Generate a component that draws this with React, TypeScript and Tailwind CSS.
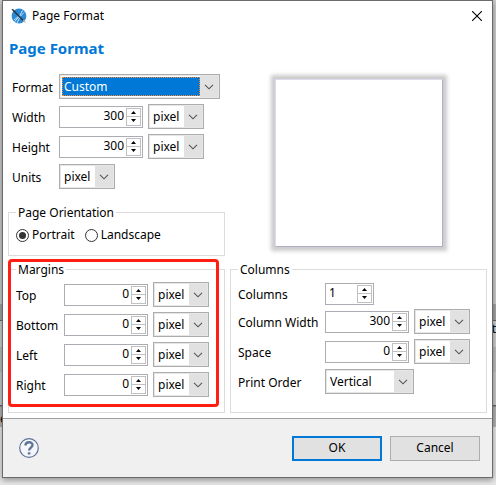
import { ReactNode } from "react";

function Chevron() {
  return (
    <span className="pointer-events-none absolute inset-y-px right-px flex w-[18px] items-center justify-center bg-[#e1e1e1]">
      <svg width="10" height="6" viewBox="0 0 10 6" fill="none" stroke="#555" strokeWidth="1.1">
        <path d="M1 .8 5 4.8 9 .8" />
      </svg>
    </span>
  );
}

function Combo({ id, label, value, width, active }: { id: string; label?: string; value: string; width: string; active?: boolean }) {
  return (
    <div className={`relative h-[25px] border border-[#adadad] bg-[#e6e6e6] p-px ${width}`}>
      <select
        id={id}
        aria-label={label}
        className={`block h-full w-full appearance-none rounded-none bg-white pr-5 pl-[3px] leading-[18px] outline-none ${
          active ? "text-white" : "text-black"
        }`}
      >
        <option>{value}</option>
      </select>
      {active && (
        <span aria-hidden="true" className="pointer-events-none absolute inset-y-[2px] right-[19px] left-[2px] border border-dotted border-[#ff8728] bg-[#0078d7] pl-px leading-[17px] text-white">
          {value}
        </span>
      )}
      <Chevron />
    </div>
  );
}

function Spinner({ id, value, width, left }: { id: string; value: string; width: string; left?: boolean }) {
  return (
    <div className={`flex h-[22px] border border-[#abadb3] bg-white p-px ${width}`}>
      <input
        id={id}
        type="text"
        defaultValue={value}
        className={`min-w-0 flex-1 px-0.5 pb-0.5 leading-4 outline-none ${left ? "text-left" : "text-right"}`}
      />
      <span className="flex w-[15px] flex-col border border-[#c0c0c0]">
        <button type="button" aria-label="Increase" className="flex flex-1 items-center justify-center border-b border-[#c0c0c0]">
          <svg width="5" height="3" viewBox="0 0 5 3"><path d="M0 3 2.5 0 5 3z" /></svg>
        </button>
        <button type="button" aria-label="Decrease" className="flex flex-1 items-center justify-center">
          <svg width="5" height="3" viewBox="0 0 5 3"><path d="M0 0 2.5 3 5 0z" /></svg>
        </button>
      </span>
    </div>
  );
}

function Row({ id, label, labelWidth, children }: { id: string; label: string; labelWidth: string; children: ReactNode }) {
  return (
    <div className="flex h-[25px] items-center">
      <label htmlFor={id} className={`shrink-0 pt-0.5 whitespace-nowrap ${labelWidth}`}>{label}</label>
      <div className="flex items-center gap-[5px]">{children}</div>
    </div>
  );
}

function Measure({ name, label, value, labelWidth }: { name: string; label: string; value: string; labelWidth: string }) {
  return (
    <Row id={name} label={label} labelWidth={labelWidth}>
      <Spinner id={name} value={value} width="w-[84px]" />
      <Combo id={`${name}-unit`} label={`${label} unit`} value="pixel" width="w-14" />
    </Row>
  );
}

function Radio({ label, checked }: { label: string; checked?: boolean }) {
  return (
    <label className="flex items-center gap-[3px]">
      <input
        type="radio"
        name="orientation"
        defaultChecked={checked}
        className="size-[13px] appearance-none rounded-full border border-[#333] bg-white bg-clip-content p-[2px] checked:bg-[#333]"
      />
      {label}
    </label>
  );
}

function Logo() {
  return (
    <svg width="16" height="16" viewBox="0 0 16 16" aria-hidden="true">
      <circle cx="8" cy="8" r="7.4" fill="#2a8ad6" />
      <path d="M3.5 14 8 8.5M6 15 9 9M8.5 8 11.5 2.5M9 8.500 13 4.500M3 12l5-4" stroke="#c3e3f8" strokeWidth="1" />
      <path d="m1.200 1.200 11.500 11.800" stroke="#273442" strokeWidth="1.6" />
      <path d="m11.500 13 1.500-1.500 2.500 4z" fill="#b9b9b9" />
    </svg>
  );
}

export default function App() {
  return (
    <div className="relative overflow-hidden bg-[linear-gradient(#cdcdcd_304px,#a6a6a6_304px,#a6a6a6_320px,#686868_320px,#686868_321px,#cfcfcf_321px,#cfcfcf_347px,#bdbdbd_347px,#bdbdbd_372px,#cacaca_372px,#cacaca_405px,#686868_405px,#686868_406px,#b4b4b4_407px,#b4b4b4_427px,#e8e8e8_427px)] pr-[3px] pb-[7px] pl-[2px] font-['Noto_Sans','Liberation_Sans',sans-serif] text-xs leading-4 text-black">
      <span aria-hidden="true" className="absolute top-[411px] left-0">e</span>
      <span aria-hidden="true" className="absolute top-[321px] right-0">t</span>
      <main className="relative border border-[#6b6b6b] bg-white shadow-[0_2px_6px_#0006]">
        <header className="flex h-[29px] items-center gap-[5px] pr-[9px] pl-2">
          <Logo />
          <span className="flex-1">Page Format</span>
          <button type="button" aria-label="Close" className="p-px">
            <svg width="10" height="10" viewBox="0 0 10 10" stroke="#000" strokeWidth="1.1"><path d="m0 0 10 10M10 0 0 10" /></svg>
          </button>
        </header>

        <h1 className="mt-2 pl-1.5 text-[15px] leading-5 font-bold text-[#0078d7]">Page Format</h1>

        <div className="mt-4 flex">
          <div className="flex w-[222px] shrink-0 flex-col gap-[5px] pl-[9px]">
            <Row id="format" label="Format" labelWidth="w-[47px]">
              <Combo id="format" value="Custom" width="w-[161px]" active />
            </Row>
            <Measure name="width" label="Width" value="300" labelWidth="w-[47px]" />
            <Measure name="height" label="Height" value="300" labelWidth="w-[47px]" />
            <Row id="units" label="Units" labelWidth="w-[47px]">
              <Combo id="units" value="pixel" width="w-14" />
            </Row>
            <fieldset className="mt-[9px] ml-[-4px] h-[53px] w-[217px] border border-[#dcdcdc] pl-[7px]">
              <legend className="px-[2px] pt-0.5">Page Orientation</legend>
              <div className="flex h-7 items-center gap-[10px]">
                <Radio label="Portrait" checked />
                <Radio label="Landscape" />
              </div>
            </fieldset>
          </div>
          <div className="flex flex-1 justify-center pt-[5px]">
            <div className="size-[168px] border border-t-[#dcdcf0] border-r-[#b0b0c8] border-b-[#b0b0c8] border-l-[#dcdcf0] bg-white shadow-[0_0_4px_4px_#cbcbcb]" />
          </div>
        </div>

        <div className="mt-1 flex gap-[5px] px-[5px]">
          <div className="relative w-[217px] shrink-0">
            <fieldset className="h-[153px] border border-[#dcdcdc] pl-[7px]">
              <legend className="px-[2px] pt-0.5">Margins</legend>
              <div className="flex flex-col gap-[5px] pt-1">
                <Measure name="top" label="Top" value="0" labelWidth="w-12" />
                <Measure name="bottom" label="Bottom" value="0" labelWidth="w-12" />
                <Measure name="left" label="Left" value="0" labelWidth="w-12" />
                <Measure name="right" label="Right" value="0" labelWidth="w-12" />
              </div>
            </fieldset>
            <div className="pointer-events-none absolute -top-px left-0 h-[148px] w-[211px] rounded-sm border-3 border-[#ff1e12]" />
          </div>
          <fieldset className="h-[153px] flex-1 border border-[#dcdcdc] pl-[7px]">
            <legend className="px-[2px] pt-0.5">Columns</legend>
            <div className="flex flex-col gap-[5px] pt-[3px]">
              <div className="-mb-[2px]">
                <Row id="columns" label="Columns" labelWidth="w-[87px]">
                  <Spinner id="columns" value="1" width="w-[49px]" left />
                </Row>
              </div>
              <Measure name="column-width" label="Column Width" value="300" labelWidth="w-[87px]" />
              <Measure name="space" label="Space" value="0" labelWidth="w-[87px]" />
              <Row id="order" label="Print Order" labelWidth="w-[87px]">
                <Combo id="order" value="Vertical" width="w-[89px]" />
              </Row>
            </div>
          </fieldset>
        </div>

        <footer className="mt-[5px] flex h-[59px] items-center border-t border-[#a0a0a0] bg-[#f0f0f0] pr-3 pl-4">
          <button type="button" aria-label="Help" className="size-5">
            <svg width="20" height="20" viewBox="0 0 20 20" fill="none" stroke="#5f7397">
              <circle cx="10" cy="10" r="9.3" strokeWidth="1.2" fill="#f4f6f9" />
              <path d="M6.500 7.500C6.500 3.200 13.500 3.200 13.500 7c0 2.600-3.400 2.700-3.400 5.600" strokeWidth="2.4" />
              <path d="M10.100 14.300v2.200" strokeWidth="2.600" />
            </svg>
          </button>
          <div className="ml-auto flex gap-2">
            <button type="button" className="h-[25px] w-[90px] border-2 border-[#0078d7] bg-[#e1e1e1]">OK</button>
            <button type="button" className="h-[25px] w-[90px] border border-[#adadad] bg-[#e1e1e1]">Cancel</button>
          </div>
        </footer>
      </main>
    </div>
  );
}
